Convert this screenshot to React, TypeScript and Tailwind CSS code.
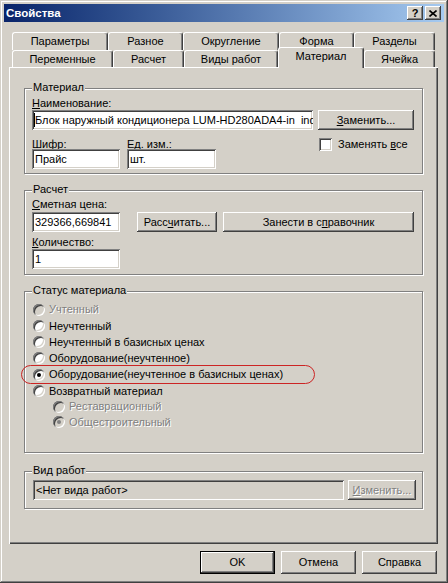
import React from "react";

const raised =
  "shadow-[inset_-1px_-1px_0_#404040,inset_1px_1px_0_#ffffff,inset_-2px_-2px_0_#808080,inset_2px_2px_0_#d4d0c8]";
const sunken =
  "shadow-[inset_1px_1px_0_#808080,inset_-1px_-1px_0_#ffffff,inset_2px_2px_0_#404040,inset_-2px_-2px_0_#d4d0c8]";
const disabledText = "text-[#808080] [text-shadow:1px_1px_0_#ffffff]";

function Group({
  title,
  className,
  children,
}: {
  title: string;
  className: string;
  children: React.ReactNode;
}) {
  return (
    <div
      className={`relative border border-[#808080] shadow-[inset_1px_1px_0_#ffffff,1px_1px_0_#ffffff] ${className}`}
    >
      <span className="absolute left-[7px] top-[-8px] bg-[#d4d0c8] px-[1px] leading-[13px] whitespace-nowrap">
        {title}
      </span>
      {children}
    </div>
  );
}

function Btn({
  className,
  children,
}: {
  className: string;
  children: React.ReactNode;
}) {
  return (
    <div
      className={`flex items-center justify-center bg-[#d4d0c8] whitespace-nowrap ${raised} ${className}`}
    >
      {children}
    </div>
  );
}

function Radio({
  checked,
  disabled,
}: {
  checked?: boolean;
  disabled?: boolean;
}) {
  return (
    <div
      className={`relative w-[12px] h-[12px] shrink-0 rounded-full ${
        disabled ? "bg-[#d4d0c8]" : "bg-white"
      } shadow-[inset_1px_1px_0_#808080,inset_-1px_-1px_0_#ffffff,inset_2px_2px_0_#404040,inset_-2px_-2px_0_#d4d0c8]`}
    >
      {checked && (
        <div
          className={`absolute left-[4px] top-[4px] w-[4px] h-[4px] rounded-full ${
            disabled ? "bg-[#808080]" : "bg-black"
          }`}
        />
      )}
    </div>
  );
}

function RadioRow({
  label,
  checked,
  disabled,
  className,
}: {
  label: string;
  checked?: boolean;
  disabled?: boolean;
  className: string;
}) {
  return (
    <div className={`flex items-center ${className}`}>
      <Radio checked={checked} disabled={disabled} />
      <span
        className={`ml-[4px] whitespace-nowrap ${disabled ? disabledText : ""}`}
      >
        {label}
      </span>
    </div>
  );
}

export default function App() {
  const row1: [string, string][] = [
    ["Параметры", "w-[96px]"],
    ["Разное", "w-[75px]"],
    ["Округление", "w-[96px]"],
    ["Форма", "w-[75px]"],
    ["Разделы", "w-[81px]"],
  ];
  const row2: [string, string, boolean][] = [
    ["Переменные", "w-[101px]", false],
    ["Расчет", "w-[71px]", false],
    ["Виды работ", "w-[94px]", false],
    ["Материал", "w-[86px]", true],
    ["Ячейка", "w-[71px]", false],
  ];

  return (
    <div className="w-[448px] h-[583px] bg-[#d4d0c8] p-[4px] flex flex-col font-['Liberation_Sans',Arial,sans-serif] text-[11px] leading-[13px] text-black shadow-[inset_-1px_-1px_0_#404040,inset_1px_1px_0_#d4d0c8,inset_-2px_-2px_0_#808080,inset_2px_2px_0_#ffffff] select-none">
      {/* Title bar */}
      <div className="h-[18px] flex items-center justify-between bg-linear-to-r from-[#0a246a] to-[#a6caf0] pl-[2px] pr-[3px]">
        <span className="text-white font-bold text-[11.5px] leading-[14px]">
          Свойства
        </span>
        <div className="flex gap-[2px]">
          <div
            className={`w-[16px] h-[14px] bg-[#d4d0c8] flex items-center justify-center font-bold text-[11px] leading-[11px] ${raised}`}
          >
            ?
          </div>
          <div
            className={`w-[16px] h-[14px] bg-[#d4d0c8] flex items-center justify-center ${raised}`}
          >
            <svg width="8" height="7" viewBox="0 0 8 7">
              <path
                d="M0.5 0.5 L7.5 6.5 M7.5 0.5 L0.5 6.5"
                stroke="#000"
                strokeWidth="1.6"
                fill="none"
              />
            </svg>
          </div>
        </div>
      </div>

      {/* Tabs */}
      <div className="mt-[10px] ml-[8px] flex h-[18px]">
        {row1.map(([t, w]) => (
          <div
            key={t}
            className={`${w} h-[18px] flex items-center justify-center border-t border-l border-white border-r border-r-[#404040] rounded-t-[3px] shadow-[inset_-1px_0_0_#808080] whitespace-nowrap`}
          >
            {t}
          </div>
        ))}
      </div>
      <div className="ml-[8px] flex h-[17px] items-end">
        {row2.map(([t, w, sel]) =>
          sel ? (
            <div
              key={t}
              className={`${w} relative z-10 h-[21px] mb-[-1px] flex justify-center pt-[2px] bg-[#d4d0c8] border-t border-l border-white border-r border-r-[#404040] rounded-t-[3px] shadow-[inset_-1px_0_0_#808080] whitespace-nowrap`}
            >
              {t}
            </div>
          ) : (
            <div
              key={t}
              className={`${w} h-[17px] flex items-center justify-center border-t border-l border-white border-r border-r-[#404040] rounded-t-[3px] shadow-[inset_-1px_0_0_#808080] whitespace-nowrap`}
            >
              {t}
            </div>
          )
        )}
      </div>

      {/* Panel */}
      <div className="ml-[5px] w-[429px] h-[477px] flex flex-col pl-[15px] pt-[21px] shadow-[inset_1px_1px_0_#ffffff,inset_-1px_-1px_0_#404040,inset_-2px_-2px_0_#808080]">
        {/* Материал */}
        <Group title="Материал" className="w-[399px] h-[86px]">
          <div className="pl-[7px] pt-[8px] flex flex-col">
            <div className="h-[13px]">
              <u>Н</u>аименование:
            </div>
            <div className="flex">
              <div
                className={`relative w-[281px] h-[20px] bg-white overflow-hidden flex items-center pl-[3px] ${sunken}`}
              >
                <div className="absolute left-[2px] top-[3px] w-[1px] h-[14px] bg-black" />
                <span className="whitespace-pre">
                  Блок наружный кондиционера LUM-HD280ADA4-in  indoor
                </span>
              </div>
              <Btn className="ml-[5px] w-[96px] h-[20px]">
                <span>
                  <u>З</u>аменить...
                </span>
              </Btn>
            </div>
            <div className="flex mt-[8px]">
              <div className="flex flex-col w-[95px]">
                <div className="h-[13px]">
                  <u>Ш</u>ифр:
                </div>
                <div
                  className={`mt-[-2px] w-[88px] h-[20px] bg-white flex items-center pl-[3px] ${sunken}`}
                >
                  Прайс
                </div>
              </div>
              <div className="flex flex-col w-[89px]">
                <div className="h-[13px]">
                  <u>Е</u>д. изм.:
                </div>
                <div
                  className={`mt-[-2px] w-[89px] h-[20px] bg-white flex items-center pl-[3px] ${sunken}`}
                >
                  шт.
                </div>
              </div>
              <div className="ml-[103px] flex items-center h-[13px]">
                <div className={`w-[13px] h-[13px] bg-white ${sunken}`} />
                <span className="ml-[6px] whitespace-nowrap">
                  Заменять <u>в</u>се
                </span>
              </div>
            </div>
          </div>
        </Group>

        {/* Расчет */}
        <Group title="Расчет" className="mt-[16px] w-[399px] h-[85px]">
          <div className="pl-[7px] pt-[7px] flex flex-col">
            <div className="h-[13px]">
              <u>С</u>метная цена:
            </div>
            <div className="flex mt-[1px]">
              <div
                className={`w-[88px] h-[20px] bg-white flex items-center pl-[3px] ${sunken}`}
              >
                329366,669841
              </div>
              <Btn className="ml-[17px] w-[80px] h-[20px]">
                <span>
                  Расс<u>ч</u>итать...
                </span>
              </Btn>
              <Btn className="ml-[6px] w-[191px] h-[20px]">
                <span>
                  Занести в с<u>п</u>равочник
                </span>
              </Btn>
            </div>
            <div className="h-[13px] mt-[4px]">
              <u>К</u>оличество:
            </div>
            <div
              className={`w-[88px] h-[20px] bg-white flex items-center pl-[3px] ${sunken}`}
            >
              1
            </div>
          </div>
        </Group>

        {/* Статус материала */}
        <Group title="Статус материала" className="mt-[16px] w-[399px] h-[162px]">
          <div className="pl-[8px] pt-[9px] flex flex-col">
            <RadioRow label="Учтенный" disabled className="h-[17px]" />
            <RadioRow label="Неучтенный" className="h-[16px]" />
            <RadioRow label="Неучтенный в базисных ценах" className="h-[16px]" />
            <RadioRow label="Оборудование(неучтенное)" className="h-[16px]" />
            <RadioRow
              label="Оборудование(неучтенное в базисных ценах)"
              checked
              className="h-[17px]"
            />
            <RadioRow label="Возвратный материал" className="h-[16px]" />
            <RadioRow
              label="Реставрационный"
              disabled
              className="h-[15px] pl-[20px]"
            />
            <RadioRow
              label="Общестроительный"
              disabled
              checked
              className="h-[16px] pl-[20px]"
            />
          </div>
          <div className="absolute left-[-4px] top-[73px] w-[294px] h-[19px] rounded-[10px] border border-[#cc2424]" />
        </Group>

        {/* Вид работ */}
        <Group title="Вид работ" className="mt-[18px] w-[399px] h-[38px]">
          <div className="pl-[8px] pt-[8px] flex">
            <div
              className={`w-[311px] h-[20px] bg-[#d4d0c8] flex items-center pl-[3px] ${sunken}`}
            >
              &lt;Нет вида работ&gt;
            </div>
            <Btn className="ml-[4px] w-[68px] h-[20px]">
              <span className={disabledText}>
                <u>И</u>зменить...
              </span>
            </Btn>
          </div>
        </Group>
      </div>

      {/* Bottom buttons */}
      <div className="mt-[7px] pl-[196px] flex gap-[6px]">
        <div
          className={`w-[75px] h-[23px] flex items-center justify-center bg-[#d4d0c8] shadow-[inset_0_0_0_1px_#000000,inset_-2px_-2px_0_#404040,inset_2px_2px_0_#ffffff,inset_-3px_-3px_0_#808080,inset_3px_3px_0_#d4d0c8]`}
        >
          OK
        </div>
        <Btn className="w-[75px] h-[23px]">Отмена</Btn>
        <Btn className="w-[75px] h-[23px]">Справка</Btn>
      </div>
    </div>
  );
}
